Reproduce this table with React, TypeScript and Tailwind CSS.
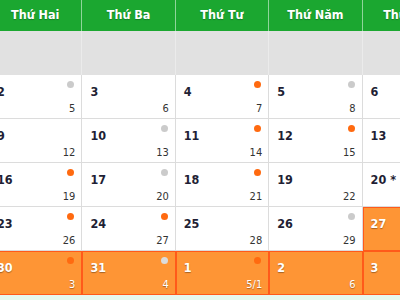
import React from "react";

type Cell = { d: string; l: string; dot?: "o" | "g"; hl?: boolean };

const weeks: Cell[][] = [
  [
    { d: "2", l: "5", dot: "g" },
    { d: "3", l: "6" },
    { d: "4", l: "7", dot: "o" },
    { d: "5", l: "8", dot: "g" },
    { d: "6", l: "9" },
  ],
  [
    { d: "9", l: "12" },
    { d: "10", l: "13", dot: "g" },
    { d: "11", l: "14", dot: "o" },
    { d: "12", l: "15", dot: "o" },
    { d: "13", l: "16" },
  ],
  [
    { d: "16", l: "19", dot: "o" },
    { d: "17", l: "20", dot: "g" },
    { d: "18", l: "21", dot: "o" },
    { d: "19", l: "22" },
    { d: "20 *", l: "23" },
  ],
  [
    { d: "23", l: "26", dot: "o" },
    { d: "24", l: "27", dot: "o" },
    { d: "25", l: "28" },
    { d: "26", l: "29", dot: "g" },
    { d: "27", l: "30", hl: true },
  ],
  [
    { d: "30", l: "3", dot: "o", hl: true },
    { d: "31", l: "4", dot: "g", hl: true },
    { d: "1", l: "5/1", dot: "o", hl: true },
    { d: "2", l: "6", hl: true },
    { d: "3", l: "7", hl: true },
  ],
];

const heads = ["Thứ Hai", "Thứ Ba", "Thứ Tư", "Thứ Năm", "Thứ Sáu"];

const font = { fontFamily: '"DejaVu Sans Condensed", "DejaVu Sans", sans-serif' };

function DayCell({ c }: { c: Cell }) {
  const base =
    "relative h-[44px] border-r border-b flex flex-col justify-between pl-[8px] pr-[6px] pt-[7px] pb-[4px]";
  const cls = c.hl
    ? base +
      " bg-[#fe9535] border-[#ff5a1a] shadow-[inset_1px_1px_0_#ff5a1a] text-white [text-shadow:0_1px_1px_rgba(0,0,0,0.35)]"
    : base + " bg-white border-[#dcdcdc]";
  return (
    <div className={cls}>
      <div className={"text-[12.5px] leading-[20px] font-bold " + (c.hl ? "text-white" : "text-[#1f1f35]")}>
        {c.d}
      </div>
      <div className={"text-[11px] leading-[13px] text-right " + (c.hl ? "text-white" : "text-[#333]")}>
        {c.l}
      </div>
      {c.dot && (
        <span
          className={
            "absolute top-[6px] right-[7px] w-[7px] h-[7px] rounded-full " +
            (c.dot === "o" ? "bg-[#ff6a10]" : c.hl ? "bg-[#dcdcdc]" : "bg-[#cbcbcb]")
          }
        />
      )}
    </div>
  );
}

export default function App() {
  return (
    <div className="w-[400px] h-[300px] overflow-hidden bg-[#e6f8ee]" style={font}>
      <div className="ml-[-11px] w-[467px]">
        <div className="grid grid-cols-5 h-[31px] bg-[#1ba730]">
          {heads.map((h) => (
            <div
              key={h}
              className="border-r border-[#8fd59a] flex items-center justify-center text-white font-bold text-[12.5px] [text-shadow:0_1px_1px_rgba(0,0,0,0.25)]"
            >
              {h}
            </div>
          ))}
        </div>
        <div className="grid grid-cols-5 h-[44px] bg-[#e1e1e1]">
          {heads.map((h) => (
            <div key={h} className="border-r border-[#ebebeb]" />
          ))}
        </div>
        {weeks.map((w, i) => (
          <div key={i} className="grid grid-cols-5">
            {w.map((c, j) => (
              <DayCell key={j} c={c} />
            ))}
          </div>
        ))}
      </div>
    </div>
  );
}
